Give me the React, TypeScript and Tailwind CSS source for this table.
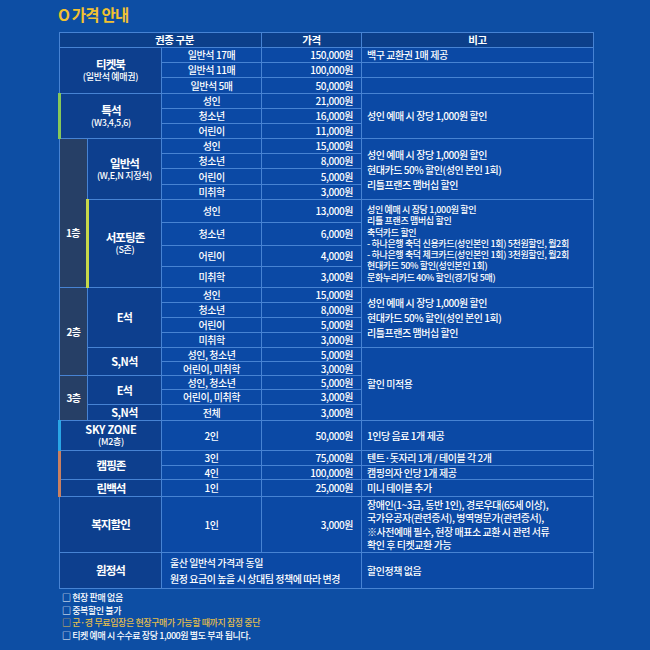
import React from "react";

const BD = "border border-[#4783d3]";
const C = `${BD} bg-[#0b49a5] p-0 text-center`;
const P = `${BD} bg-[#0b49a5] p-0 pr-[8px] text-right`;
const N = `${BD} bg-[#0b49a5] p-0 pl-[5px] text-left`;
const L = `${BD} bg-[#0d3f8e] p-0 text-center font-bold`;
const F = `${BD} bg-[#263f66] p-0 text-center font-bold`;

function Sub({ t }: { t: string }) {
  return <div className="text-[9px] font-medium leading-[12px] tracking-[-0.3px]">{t}</div>;
}

export default function App() {
  return (
    <div className="w-[650px] min-h-[650px] bg-[#0d4ea4] text-white font-['Noto_Sans_CJK_KR','Noto_Sans',sans-serif] pl-[58px] pt-[4px]">
      <div className="text-[15.5px] leading-[20px] font-bold text-[#f2c230] tracking-[-0.8px]">
        O 가격 안내
      </div>
      <table className="mt-[8px] w-[536px] table-fixed border-collapse text-[10px] font-medium leading-[12px] tracking-[-0.45px]">
        <colgroup>
          <col className="w-[28px]" />
          <col className="w-[74px]" />
          <col className="w-[100px]" />
          <col className="w-[100px]" />
          <col />
        </colgroup>
        <tbody>
          <tr className="h-[15px]">
            <td colSpan={3} className={`${BD} bg-[#0c3f8a] p-0 pl-[28px] text-center font-bold text-[10.5px]`}>권종 구분</td>
            <td className={`${BD} bg-[#0c3f8a] p-0 text-center font-bold text-[10.5px]`}>가격</td>
            <td className={`${BD} bg-[#0c3f8a] p-0 text-center font-bold text-[10.5px]`}>비고</td>
          </tr>
          <tr className="h-[15px]">
            <td colSpan={2} rowSpan={3} className={L}>
              <div className="text-[11.5px] leading-[13px] tracking-[-0.9px]">티켓북</div>
              <Sub t="(일반석 예매권)" />
            </td>
            <td className={C}>일반석 17매</td>
            <td className={P}>150,000원</td>
            <td className={N}>백구 교환권 1매 제공</td>
          </tr>
          <tr className="h-[15px]">
            <td className={C}>일반석 11매</td>
            <td className={P}>100,000원</td>
            <td className={N}></td>
          </tr>
          <tr className="h-[16px]">
            <td className={C}>일반석 5매</td>
            <td className={P}>50,000원</td>
            <td className={N}></td>
          </tr>
          <tr className="h-[15px]">
            <td colSpan={2} rowSpan={3} className={`${L} border-l-[3px] border-l-[#86c85a]`}>
              <div className="text-[11.5px] leading-[13px] tracking-[-0.9px]">특석</div>
              <Sub t="(W3,4,5,6)" />
            </td>
            <td className={C}>성인</td>
            <td className={P}>21,000원</td>
            <td rowSpan={3} className={N}>성인 예매 시 장당 1,000원 할인</td>
          </tr>
          <tr className="h-[15px]">
            <td className={C}>청소년</td>
            <td className={P}>16,000원</td>
          </tr>
          <tr className="h-[15px]">
            <td className={C}>어린이</td>
            <td className={P}>11,000원</td>
          </tr>
          {/* 1층 */}
          <tr className="h-[15px]">
            <td rowSpan={8} className={`${F} pt-[40px]`}>1층</td>
            <td rowSpan={4} className={L}>
              <div className="text-[11.5px] leading-[13px] tracking-[-0.9px]">일반석</div>
              <Sub t="(W,E,N 지정석)" />
            </td>
            <td className={C}>성인</td>
            <td className={P}>15,000원</td>
            <td rowSpan={4} className={`${N} leading-[15px]`}>
              <div>성인 예매 시 장당 1,000원 할인</div>
              <div>현대카드 50% 할인(성인 본인 1회)</div>
              <div>리틀프랜즈 맴버십 할인</div>
            </td>
          </tr>
          <tr className="h-[15px]">
            <td className={C}>청소년</td>
            <td className={P}>8,000원</td>
          </tr>
          <tr className="h-[16px]">
            <td className={C}>어린이</td>
            <td className={P}>5,000원</td>
          </tr>
          <tr className="h-[15px]">
            <td className={C}>미취학</td>
            <td className={P}>3,000원</td>
          </tr>
          <tr className="h-[23px]">
            <td rowSpan={4} className={`${L} border-l-[3px] border-l-[#c6d84a]`}>
              <div className="text-[11.5px] leading-[13px] tracking-[-0.9px]">서포팅존</div>
              <Sub t="(S존)" />
            </td>
            <td className={C}>성인</td>
            <td className={P}>13,000원</td>
            <td rowSpan={4} className={`${N} text-[9px] leading-[11.3px] tracking-[-0.35px]`}>
              <div>성인 예매 시 장당 1,000원 할인</div>
              <div>리틀 프랜즈 맴버십 할인</div>
              <div>축덕카드 할인</div>
              <div>- 하나은행 축덕 신용카드(성인본인 1회) 5천원할인, 월2회</div>
              <div>- 하나은행 축덕 체크카드(성인본인 1회) 3천원할인, 월2회</div>
              <div>현대카드 50% 할인(성인본인 1회)</div>
              <div>문화누리카드 40% 할인(경기당 5매)</div>
            </td>
          </tr>
          <tr className="h-[23px]">
            <td className={C}>청소년</td>
            <td className={P}>6,000원</td>
          </tr>
          <tr className="h-[21px]">
            <td className={C}>어린이</td>
            <td className={P}>4,000원</td>
          </tr>
          <tr className="h-[21px]">
            <td className={C}>미취학</td>
            <td className={P}>3,000원</td>
          </tr>
          {/* 2층 */}
          <tr className="h-[15px]">
            <td rowSpan={6} className={F}>2층</td>
            <td rowSpan={4} className={L}>
              <div className="text-[11px] leading-[13px] tracking-[-0.6px]">E석</div>
            </td>
            <td className={C}>성인</td>
            <td className={P}>15,000원</td>
            <td rowSpan={4} className={`${N} leading-[15px]`}>
              <div>성인 예매 시 장당 1,000원 할인</div>
              <div>현대카드 50% 할인(성인 본인 1회)</div>
              <div>리틀프랜즈 맴버십 할인</div>
            </td>
          </tr>
          <tr className="h-[15px]">
            <td className={C}>청소년</td>
            <td className={P}>8,000원</td>
          </tr>
          <tr className="h-[15px]">
            <td className={C}>어린이</td>
            <td className={P}>5,000원</td>
          </tr>
          <tr className="h-[15px]">
            <td className={C}>미취학</td>
            <td className={P}>3,000원</td>
          </tr>
          <tr className="h-[14px]">
            <td rowSpan={2} className={L}>
              <div className="text-[11px] leading-[13px] tracking-[-0.6px]">S,N석</div>
            </td>
            <td className={C}>성인, 청소년</td>
            <td className={P}>5,000원</td>
            <td rowSpan={5} className={N}>할인 미적용</td>
          </tr>
          <tr className="h-[14px]">
            <td className={C}>어린이, 미취학</td>
            <td className={P}>3,000원</td>
          </tr>
          {/* 3층 */}
          <tr className="h-[14px]">
            <td rowSpan={3} className={F}>3층</td>
            <td rowSpan={2} className={L}>
              <div className="text-[11px] leading-[13px] tracking-[-0.6px]">E석</div>
            </td>
            <td className={C}>성인, 청소년</td>
            <td className={P}>5,000원</td>
          </tr>
          <tr className="h-[15px]">
            <td className={C}>어린이, 미취학</td>
            <td className={P}>3,000원</td>
          </tr>
          <tr className="h-[16px]">
            <td className={L}>
              <div className="text-[11px] leading-[13px] tracking-[-0.6px]">S,N석</div>
            </td>
            <td className={C}>전체</td>
            <td className={P}>3,000원</td>
          </tr>
          {/* SKY ZONE */}
          <tr className="h-[30px]">
            <td colSpan={2} className={`${L} border-l-[3px] border-l-[#2aa6e6]`}>
              <div className="text-[11px] leading-[13px] tracking-[-0.2px]">SKY ZONE</div>
              <Sub t="(M2층)" />
            </td>
            <td className={C}>2인</td>
            <td className={P}>50,000원</td>
            <td className={N}>1인당 음료 1개 제공</td>
          </tr>
          <tr className="h-[15px]">
            <td colSpan={2} rowSpan={2} className={`${L} border-l-[3px] border-l-[#c98061]`}>
              <div className="text-[11.5px] leading-[13px] tracking-[-0.9px]">캠핑존</div>
            </td>
            <td className={C}>3인</td>
            <td className={P}>75,000원</td>
            <td className={N}>텐트·돗자리 1개 / 테이블 각 2개</td>
          </tr>
          <tr className="h-[14px]">
            <td className={C}>4인</td>
            <td className={P}>100,000원</td>
            <td className={N}>캠핑의자 인당 1개 제공</td>
          </tr>
          <tr className="h-[17px]">
            <td colSpan={2} className={`${L} border-l-[3px] border-l-[#c98061]`}>
              <div className="text-[11.5px] leading-[13px] tracking-[-0.9px]">린백석</div>
            </td>
            <td className={C}>1인</td>
            <td className={P}>25,000원</td>
            <td className={N}>미니 테이블 추가</td>
          </tr>
          <tr className="h-[56px]">
            <td colSpan={2} className={L}>
              <div className="text-[11.5px] leading-[13px] tracking-[-0.9px]">복지할인</div>
            </td>
            <td className={C}>1인</td>
            <td className={P}>3,000원</td>
            <td className={`${N} leading-[13.5px]`}>
              <div>장애인(1~3급, 동반 1인), 경로우대(65세 이상),</div>
              <div>국가유공자(관련증서), 병역명문가(관련증서),</div>
              <div>※사전예매 필수, 현장 매표소 교환 시 관련 서류</div>
              <div>확인 후 티켓교환 가능</div>
            </td>
          </tr>
          <tr className="h-[36px]">
            <td colSpan={2} className={L}>
              <div className="text-[11.5px] leading-[13px] tracking-[-0.9px]">원정석</div>
            </td>
            <td colSpan={2} className={`${N} pl-[8px] leading-[15.5px]`}>
              <div>울산 일반석 가격과 동일</div>
              <div>원정 요금이 높을 시 상대팀 정책에 따라 변경</div>
            </td>
            <td className={N}>할인정책 없음</td>
          </tr>
        </tbody>
      </table>
      <div className="pl-[4px] pt-[3px] text-[9px] font-medium leading-[12.7px] tracking-[-0.4px]">
        <div>□ 현장 판매 없음</div>
        <div>□ 중복할인 불가</div>
        <div className="text-[#e3bd4c]">□ 군·경 무료입장은 현장구매가 가능할 때까지 잠정 중단</div>
        <div>□ 티켓 예매 시 수수료 장당 1,000원 별도 부과 됩니다.</div>
      </div>
    </div>
  );
}
